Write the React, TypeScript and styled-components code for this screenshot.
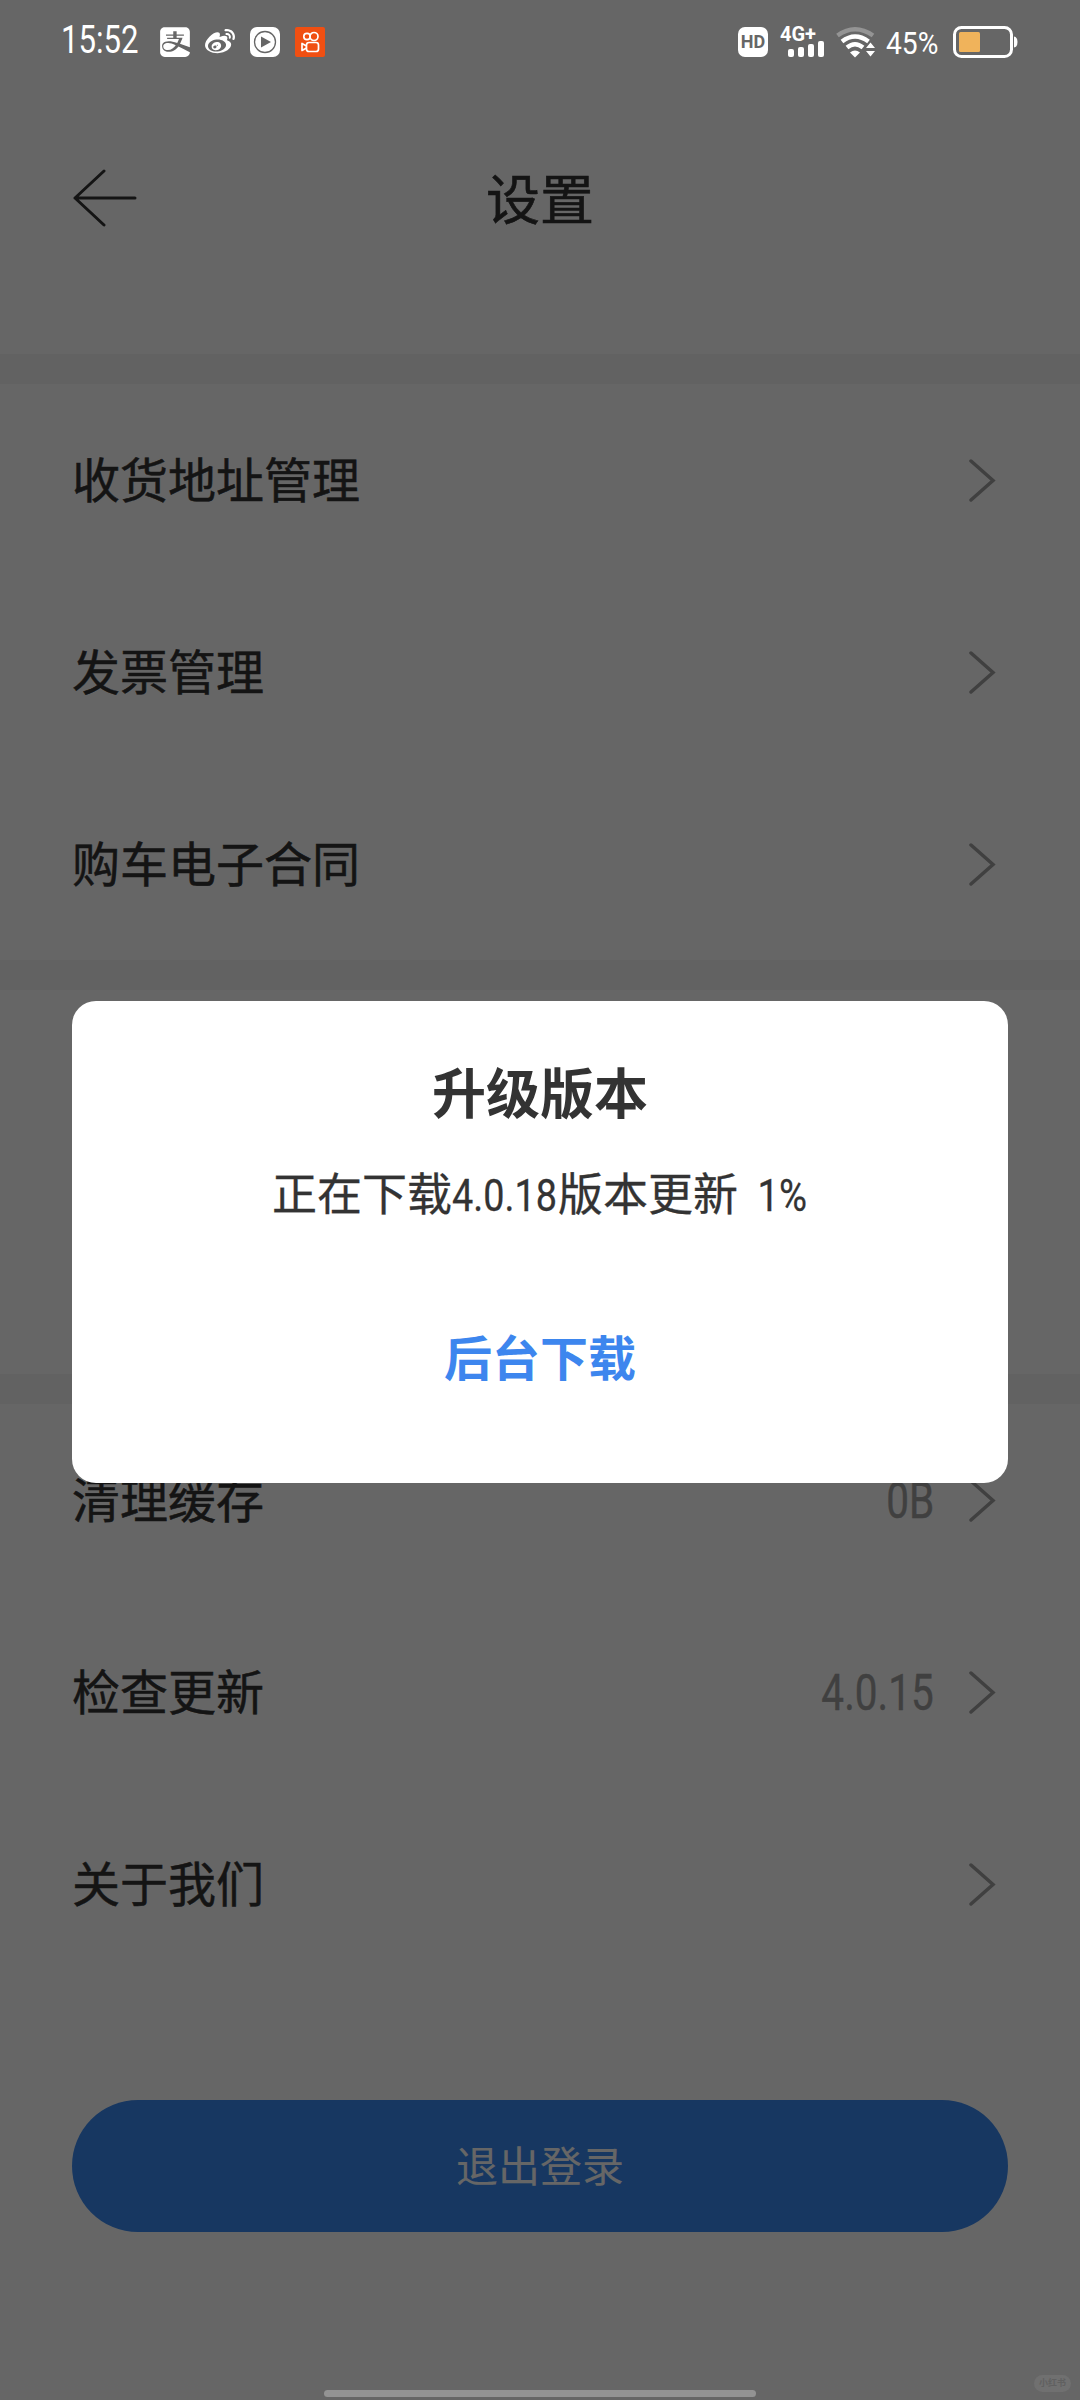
import React from 'react';
import styled, { createGlobalStyle } from 'styled-components';
import { FaAlipay, FaWeibo } from 'react-icons/fa';

const Global = createGlobalStyle`
  * { box-sizing: border-box; }
  html, body { margin: 0; padding: 0; background: #666; }
  body { font-family: "Noto Sans CJK SC", sans-serif; }
`;

const Screen = styled.div`
  position: relative;
  width: 1080px;
  height: 2400px;
  overflow: hidden;
  background: #fff;
  color: #333;
`;

const Page = styled.main`
  display: flex;
  flex-direction: column;
  height: 100%;
`;

const Header = styled.header`
  display: grid;
  grid-template-columns: 64px 1fr 64px;
  align-items: center;
  align-content: center;
  height: 354px;
  padding: 42px 72px 0;
`;

const Title = styled.h1`
  margin: 0;
  padding-bottom: 3px;
  text-align: center;
  font-size: 54px;
  font-weight: 400;
  line-height: 77px;
  -webkit-text-stroke: 0.6px currentColor;
`;

const Section = styled.section`
  display: flex;
  flex-direction: column;
  border-top: 30px solid #f5f5f5;
`;

const Row = styled.div`
  display: flex;
  align-items: center;
  height: 192px;
  padding: 0 84px 0 72px;
  font-size: 48px;
  line-height: 72px;
`;

const Label = styled.span`
  flex: 1;
  padding-bottom: 6px;
  -webkit-text-stroke: 0.5px currentColor;
`;

const Latin = styled.span<{ $width?: number; $scale: number; $from?: string }>`
  display: inline-block;
  width: ${(p) => (p.$width ? `${p.$width}px` : 'auto')};
  font-family: "Roboto", sans-serif;
  white-space: pre;
  transform: scaleX(${(p) => p.$scale});
  transform-origin: ${(p) => p.$from ?? 'left'} center;
`;

const Value = styled(Latin)`
  margin-right: 35px;
  padding-top: 1px;
  color: #a0a0a0;
  font-size: 50px;
  -webkit-text-stroke: 0.4px currentColor;
`;

const LogoutButton = styled.button`
  height: 132px;
  margin: 120px 72px 0;
  padding: 0 0 5px;
  border: 0;
  border-radius: 66px;
  background: #3a8af2;
  color: #fff;
  font: 400 42px/60px "Noto Sans CJK SC", sans-serif;
`;

const Overlay = styled.div`
  position: absolute;
  inset: 0;
  display: flex;
  flex-direction: column;
  align-items: center;
  background: rgba(0, 0, 0, 0.6);
`;

const StatusBar = styled.div`
  display: flex;
  align-items: center;
  justify-content: space-between;
  align-self: stretch;
  height: 84px;
  padding: 0 61px 0 61px;
  color: #fff;
`;

const StatusGroup = styled.div<{ $gap: number }>`
  display: flex;
  align-items: center;
  gap: ${(p) => p.$gap}px;
  & > svg { display: block; flex: none; }
`;

const Time = styled(Latin)`
  padding-bottom: 3px;
  font-size: 38px;
  line-height: 77px;
`;

const Percent = styled(Latin)`
  margin: 0 1px 0 -2px;
  padding-top: 3px;
  font-size: 31px;
  line-height: 40px;
`;

const AlipayIcon = styled(FaAlipay)`
  margin: 0 -2px;
`;

const HdBadge = styled.span`
  display: flex;
  align-items: center;
  justify-content: center;
  width: 30px;
  height: 30px;
  border-radius: 7px;
  background: #fff;
  color: #666;
  font: 700 18px/30px "Roboto", sans-serif;
`;

const Signal = styled.div`
  display: flex;
  flex-direction: column;
  width: 44px;
  height: 30px;
`;

const Network = styled.span`
  height: 14px;
  font: 700 20px/14px "Roboto", sans-serif;
`;

const Bars = styled.div`
  display: flex;
  align-items: flex-end;
  justify-content: flex-end;
  gap: 4px;
  height: 16px;
`;

const Bar = styled.i<{ $h: number }>`
  width: 6px;
  height: ${(p) => p.$h}px;
  border-radius: 2px;
  background: #fff;
`;

const Dialog = styled.div`
  display: flex;
  flex-direction: column;
  align-items: center;
  width: 936px;
  height: 482px;
  margin-top: 917px;
  padding-top: 50px;
  border-radius: 24px;
  background: #fff;
`;

const DialogTitle = styled.h2`
  margin: 0;
  font-size: 54px;
  font-weight: 700;
  line-height: 80px;
`;

const Message = styled.p`
  display: flex;
  align-items: baseline;
  margin: 29px 0 0;
  font-size: 45px;
  line-height: 64px;
  -webkit-text-stroke: 0.3px currentColor;
`;

const Progress = styled(Latin)`
  margin-left: 10px;
`;

const Action = styled.button`
  margin: 91px 0 0;
  padding: 0;
  border: 0;
  background: none;
  color: #3d86ee;
  font: 700 48px/72px "Noto Sans CJK SC", sans-serif;
`;

const HomeBar = styled.div`
  width: 432px;
  height: 7px;
  margin-top: auto;
  margin-bottom: 3px;
  border-radius: 4px;
  background: #939393;
`;

const Watermark = styled.span`
  position: absolute;
  right: 9px;
  bottom: 8px;
  width: 37px;
  height: 17px;
  border-radius: 9px;
  background: #707070;
  color: #606060;
  font-size: 9px;
  font-weight: 700;
  line-height: 16px;
  text-align: center;
`;

const Back = () => (
  <svg width="66" height="58" viewBox="0 0 66 58" fill="none" stroke="#333" strokeWidth="3" strokeLinecap="round" strokeLinejoin="round">
    <path d="M32 2 3 29 32 56M3 29H63" />
  </svg>
);

const Chevron = () => (
  <svg width="27" height="48" viewBox="0 0 27 48" fill="none" stroke="#a0a0a0" strokeWidth="3.500" strokeLinecap="round">
    <path d="M2 5 24 24.500 2 44" />
  </svg>
);

const PlayerIcon = () => (
  <svg width="30" height="30" viewBox="0 0 30 30">
    <rect width="30" height="30" rx="7" fill="#fff" />
    <circle cx="15" cy="15" r="10.500" fill="none" stroke="#666" strokeWidth="1.300" />
    <path d="M11 9.500 21 15 11 20.500Z" fill="#666" />
  </svg>
);

const KuaishouIcon = () => (
  <svg width="30" height="30" viewBox="0 0 30 30" fill="none" stroke="#fff" strokeWidth="1.700" strokeLinejoin="round">
    <rect width="30" height="30" rx="2" fill="#f04f12" stroke="none" />
    <circle cx="12" cy="9.500" r="3.200" />
    <circle cx="19" cy="9.500" r="4" />
    <rect x="11.500" y="15.500" width="12" height="9" rx="2.500" />
    <path d="M11.500 19 7 16.500V23.500L11.500 21" />
  </svg>
);

const WifiIcon = () => (
  <svg width="40" height="31" viewBox="0 0 40 31" fill="none" stroke="#fff" strokeWidth="4.400">
    <path d="M1.500 8.500Q19 -4 37 8.500" stroke="#949494" />
    <path d="M6 14.500Q19 4.500 32.500 14.500" />
    <path d="M11 20.500Q19 14 27 20.500" />
    <path d="M14 25.500Q19 21.500 24 25.500L19 30.500Z" fill="#fff" stroke="none" />
    <path d="M30 21 34.500 15.500 39 21ZM30 24 34.500 29.500 39 24Z" fill="#fff" stroke="none" />
  </svg>
);

const BatteryIcon = () => (
  <svg width="66" height="32" viewBox="0 0 66 32">
    <rect x="1.500" y="1.500" width="57" height="29" rx="7" fill="none" stroke="#fff" strokeWidth="3" />
    <rect x="6" y="6" width="21" height="20" rx="1.500" fill="#f0b35b" />
    <path d="M61 10.500Q64.500 11 64.500 16T61 21.500Z" fill="#fff" />
  </svg>
);

type Item = { label: string; value?: string };

const groups: Item[][] = [
  [{ label: '收货地址管理' }, { label: '发票管理' }, { label: '购车电子合同' }],
  [{ label: '' }, { label: '' }],
  [{ label: '清理缓存', value: '0B' }, { label: '检查更新', value: '4.0.15' }, { label: '关于我们' }],
];

export default function App() {
  return (
    <>
      <Global />
      <Screen>
        <Page>
          <Header>
            <Back />
            <Title>设置</Title>
          </Header>
          {groups.map((items, g) => (
            <Section key={g}>
              {items.map((item, i) => (
                <Row key={i}>
                  <Label>{item.label}</Label>
                  {item.value && <Value $scale={0.81} $from="right">{item.value}</Value>}
                  <Chevron />
                </Row>
              ))}
            </Section>
          ))}
          <LogoutButton>退出登录</LogoutButton>
        </Page>
        <Overlay>
          <StatusBar>
            <StatusGroup $gap={15}>
              <Time $width={84} $scale={0.82}>15:52</Time>
              <AlipayIcon size={34} />
              <FaWeibo size={30} />
              <PlayerIcon />
              <KuaishouIcon />
            </StatusGroup>
            <StatusGroup $gap={12}>
              <HdBadge>HD</HdBadge>
              <Signal>
                <Network>4G+</Network>
                <Bars>
                  <Bar $h={8} />
                  <Bar $h={10} />
                  <Bar $h={13} />
                  <Bar $h={16} />
                </Bars>
              </Signal>
              <WifiIcon />
              <Percent $width={54} $scale={0.91}>45%</Percent>
              <BatteryIcon />
            </StatusGroup>
          </StatusBar>
          <Dialog role="dialog">
            <DialogTitle>升级版本</DialogTitle>
            <Message>
              正在下载
              <Latin $width={106} $scale={0.84}>4.0.18</Latin>
              版本更新
              <Progress $width={60} $scale={0.85}> 1%</Progress>
            </Message>
            <Action>后台下载</Action>
          </Dialog>
          <HomeBar />
          <Watermark>小红书</Watermark>
        </Overlay>
      </Screen>
    </>
  );
}
